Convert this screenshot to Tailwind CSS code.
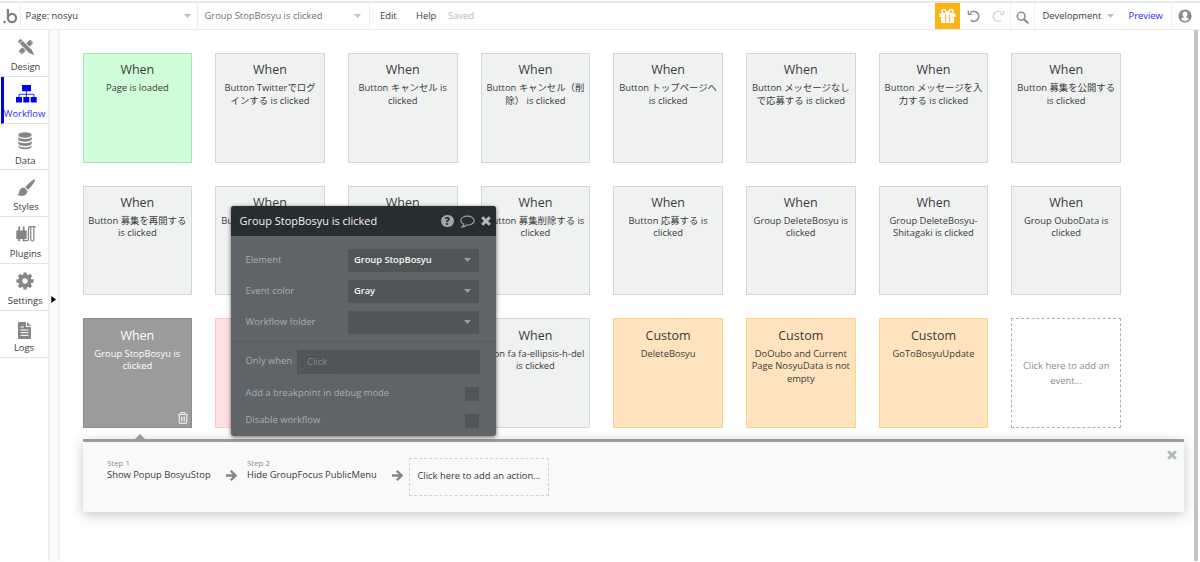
<!DOCTYPE html>
<html lang="ja">
  <head>
    <meta charset="UTF-8" />
    <meta name="viewport" content="width=device-width, initial-scale=1.0" />
    <title>nosyu - Workflow</title>
    <script src="https://cdn.jsdelivr.net/npm/@tailwindcss/browser@4"></script>
  </head>
  <body class="bg-white overflow-hidden font-['Open_Sans','Noto_Sans_CJK_JP',sans-serif] text-[9.4px] text-[#3a3a3a]">
    <div class="relative flex flex-col w-[1200px] h-[562px] overflow-hidden">
      <!-- top bar -->
      <header class="flex items-stretch shrink-0 h-[29px] mt-px border-t-2 border-[#e6e9e9] border-b border-b-[#ebebeb]">
        <div class="flex items-center w-[20.5px] border-r border-[#eef0f1] pl-[3px]">
          <svg class="w-[15px] h-[18px]" viewBox="0 0 15 18" fill="none" stroke="#808080" stroke-width="2.2">
            <circle cx="9" cy="11" r="4.1" />
            <path d="M4.900 2v9" />
            <circle cx="1.500" cy="15" r="1.300" fill="#808080" stroke="none" />
          </svg>
        </div>
        <div class="flex items-center justify-between w-[177px] border-r border-[#e9eff1] pl-[5px] pr-[6px]">
          <span>Page: nosyu</span>
          <svg class="w-[7px] h-[4px]" viewBox="0 0 7 4" fill="#b4c2c9"><path d="M0 0h7L3.5 4z" /></svg>
        </div>
        <div class="flex items-center justify-between w-[172px] border-r border-[#e9eff1] pl-[7px] pr-[8px] text-[#707070]">
          <span>Group StopBosyu is clicked</span>
          <svg class="w-[7px] h-[4px]" viewBox="0 0 7 4" fill="#b4c2c9"><path d="M0 0h7L3.5 4z" /></svg>
        </div>
        <div class="flex items-center pl-[10.5px]">
          <span class="w-[36px]">Edit</span>
          <span class="w-[32px]">Help</span>
          <span class="text-[#b9b9b9]">Saved</span>
        </div>
        <div class="flex items-stretch ml-auto">
          <div class="flex items-center justify-center w-[25px] bg-[#fdb515]">
            <svg class="w-[17px] h-[16px]" viewBox="0 0 17 16" fill="#fff">
              <path d="M.5 5.5h16v3.600h-16zM2 9.200h13V15H2z" />
              <path d="M8.300 5.600C7.400 3 6.300 1.500 4.900 1.500a1.900 1.900 0 0 0 0 3.900zM8.700 5.600c.9-2.600 2-4.100 3.400-4.100a1.900 1.900 0 0 1 0 3.900z" fill="none" stroke="#fff" stroke-width="1.500" />
              <path d="M6.600 6.300v8.100M10.400 6.300v8.100" stroke="#fdb515" stroke-width=".9" />
            </svg>
          </div>
          <div class="flex items-center w-[50.500px] pl-[6.500px] gap-[12px] border-r border-[#eef0f1]">
            <svg class="w-[13px] h-[14px]" viewBox="0 0 13 14" fill="none" stroke="#8f8f8f" stroke-width="1.700">
              <path d="M1 5.300h3.800M1.300 1.800v3.500" stroke-width="1.400" />
              <path d="M3.200 3.700a5 5 0 1 1 .5 7.600" />
            </svg>
            <svg class="w-[13px] h-[14px]" viewBox="0 0 13 14" fill="none" stroke="#d9d9d9" stroke-width="1.700">
              <path d="M12 5.300H8.200M11.700 1.800v3.500" stroke-width="1.400" />
              <path d="M9.800 3.700a5 5 0 1 0-.5 7.600" />
            </svg>
          </div>
          <div class="flex items-center justify-center w-[24.500px] border-r border-[#eef0f1]">
            <svg class="w-[13px] h-[13px] mt-[2px]" viewBox="0 0 13 13" fill="none" stroke="#8c8c8c">
              <circle cx="5.200" cy="5.200" r="3.900" stroke-width="1.600" />
              <path d="M8.200 8.200l3.600 3.600" stroke-width="2" stroke-linecap="round" />
            </svg>
          </div>
          <div class="flex items-center justify-between w-[79px] pl-[7.500px]">
            <span>Development</span>
            <svg class="w-[7px] h-[4px]" viewBox="0 0 7 4" fill="#b4c2c9"><path d="M0 0h7L3.500 4z" /></svg>
          </div>
          <div class="flex items-center w-[58px] pl-[14.500px] border-r border-[#eef0f1] text-[#2b2bf0]">Preview</div>
          <div class="flex items-center w-[28px] pl-[6px]">
            <svg class="w-[14px] h-[14px]" viewBox="0 0 14 14">
              <circle cx="7" cy="7" r="6.600" fill="#8c8c8c" />
              <path d="M7 2.600c1.600 0 2.500 1.100 2.400 2.700 0 1.200-.5 2-1 2.500v.6c.9.500 2.100.7 2.600 1.600C10 11.300 8.600 12 7 12s-3-.7-4-2c.5-.9 1.700-1.100 2.600-1.600v-.6c-.5-.5-1-1.300-1-2.500C4.500 3.700 5.400 2.600 7 2.600z" fill="#fff" />
            </svg>
          </div>
        </div>
      </header>

      <div class="flex h-[531px]">
        <!-- sidebar -->
        <nav class="flex flex-col w-[48px] shrink-0 text-center leading-[12px]">
          <div class="flex flex-col items-center h-[46.800px] pt-[8px] pl-[3px] border-b border-[#e4e4e4]">
            <svg class="w-[18px] h-[18px]" viewBox="0 0 18 18" fill="none">
              <path d="M3.200 14.800L14.800 3.200" stroke="#858585" stroke-width="4.600" />
              <path d="M5.500 15.700l-1.600-1.600M3.900 17l-2.900-2.900M14.300 3.700l1.500 1.500" stroke="#fff" stroke-width=".7" />
              <path d="M4.500 4.500l9 9" stroke="#fff" stroke-width="5.400" />
              <path d="M2.200 2.200l10.900 10.900" stroke="#858585" stroke-width="3.900" />
              <path d="M11.300 14.600l3.300-3.300 2.700 6z" fill="#858585" />
              <path d="M2.800 5.500l2.700-2.700" stroke="#fff" stroke-width=".8" />
            </svg>
            <span class="mt-[5px]">Design</span>
          </div>
          <div class="flex flex-col items-center h-[46.900px] pt-[8px] ml-[1px] border-l-[3px] border-l-[#0000f0] border-b border-b-[#e4e4e4] text-[#3030f5]">
            <svg class="w-[21px] h-[18px]" viewBox="0 0 21 18" fill="#0000f0">
              <path d="M6 0h9v6.300H6zM0 12h6v5.600H0zM7.300 12h6v5.600h-6zM14.700 12h6v5.600h-6z" />
              <path d="M10.400 6v6M3 12V9.300h14.800V12" fill="none" stroke="#0000f0" stroke-width=".8" />
            </svg>
            <span class="mt-[5px] -ml-[3px]">Workflow</span>
          </div>
          <div class="flex flex-col items-center h-[46.800px] pt-[8px] pl-[2.500px] border-b border-[#e4e4e4]">
            <svg class="w-[14px] h-[18px]" viewBox="0 0 14 18" fill="#858585">
              <ellipse cx="7" cy="3" rx="6.700" ry="2.700" />
              <path d="M.3 4.800c1 3 12.400 3 13.400 0v2.700c-1 3-12.400 3-13.400 0zM.3 9c1 3 12.400 3 13.400 0v2.700c-1 3-12.400 3-13.400 0zM.3 13.200c1 3 12.400 3 13.400 0v1.600c-1 3.200-12.400 3.200-13.400 0z" />
            </svg>
            <span class="mt-[5px]">Data</span>
          </div>
          <div class="flex flex-col items-center h-[46.900px] pt-[9px] pl-[4px] border-b border-[#e4e4e4]">
            <svg class="w-[18px] h-[18px]" viewBox="0 0 18 18" fill="#858585">
              <path d="M17.700.5c.6.600.1 1.700-.4 2.500-1.800 3-4 5.800-6.200 7.700L8.400 8C10.400 5.500 13.500 2.800 16 1c.6-.4 1.200-.9 1.700-.5z" />
              <path d="M7.600 8.700l2.700 2.700c.3 2.700-1.500 4.900-4.500 5.300-2.200.3-4.200 0-5.500-.9 1.400-.3 1.600-1.500 1.900-3.200.4-2.500 2.600-4.400 5.400-3.900z" />
            </svg>
            <span class="mt-[4px]">Styles</span>
          </div>
          <div class="flex flex-col items-center h-[46.800px] pt-[8px] pl-[3px] border-b border-[#e4e4e4]">
            <svg class="w-[20px] h-[18px]" viewBox="0 0 20 18" fill="#858585">
              <path d="M2.300 1.500h1.800V6H2.300zM6.800 1.500h1.800V6H6.800zM.3 5.500h10.400V14H8.500v2.300H6.700V14H4v2.300H2.200V14H.3z" />
              <path d="M7.500 15.700h3.200c1.200 0 1.800-.6 1.800-1.700V3.700c0-1.300.5-2 1.600-2h4.200c.8 0 1 .3 1 1" fill="none" stroke="#858585" stroke-width="1.300" />
              <path d="M14.800 2v12.500c0 2 3 2 3 0V2" fill="none" stroke="#858585" stroke-width="1.200" />
            </svg>
            <span class="mt-[5px]">Plugins</span>
          </div>
          <div class="flex flex-col items-center h-[46.900px] pt-[8px] pl-[2.500px] border-b border-[#e4e4e4]">
            <svg class="w-[18px] h-[18px]" viewBox="0 0 18 18" fill="none" stroke="#858585">
              <circle cx="9" cy="9" r="4.700" stroke-width="4" />
              <path d="M9 .4v3M9 14.600v3M.4 9h3M14.600 9h3M2.900 2.900L5 5M13 13l2.100 2.100M2.900 15.100L5 13M13 5l2.100-2.100" stroke-width="3.300" />
            </svg>
            <span class="mt-[5px]">Settings</span>
          </div>
          <div class="flex flex-col items-center h-[46.800px] pt-[11px] border-b border-[#e4e4e4]">
            <svg class="w-[13px] h-[17px]" viewBox="0 0 13 17">
              <path d="M1 0h7v5h5v11a1 1 0 0 1-1 1H1a1 1 0 0 1-1-1V1a1 1 0 0 1 1-1zM9 0l4 4H9z" fill="#858585" />
              <path d="M2.500 5h3.500M2.500 8h8M2.500 10.700h8M2.500 13.400h8" stroke="#fff" stroke-width="1" />
            </svg>
            <span class="mt-[3px]">Logs</span>
          </div>
        </nav>
        <div class="flex w-[12px] shrink-0 bg-[#fafafa] border-x-2 border-[#efefef]">
          <svg class="w-[5px] h-[7px] mt-[265.500px] ml-px" viewBox="0 0 5 7" fill="#000"><path d="M.3 0L5 3.500.3 7z" /></svg>
        </div>

        <!-- workflow canvas -->
        <main class="flex flex-col grow pt-[23px] pl-[22.500px]">
          <div class="grid grid-cols-[repeat(8,109.700px)] auto-rows-[109.700px] gap-[23px] text-center leading-[12.500px]">
            <div class="border border-[#a5e8ae] bg-[#cffed8] pt-[7px]">
              <h3 class="text-[12.500px] leading-[17px] mb-[4px]">When</h3>
              <p>Page is loaded</p>
            </div>
            <div class="border border-[#d0d8da] bg-[#f0f2f2] pt-[7px]">
              <h3 class="text-[12.500px] leading-[17px] mb-[4px]">When</h3>
              <p>Button Twitterでログ<br />インする is clicked</p>
            </div>
            <div class="border border-[#d0d8da] bg-[#f0f2f2] pt-[7px]">
              <h3 class="text-[12.500px] leading-[17px] mb-[4px]">When</h3>
              <p>Button キャンセル is<br />clicked</p>
            </div>
            <div class="border border-[#d0d8da] bg-[#f0f2f2] pt-[7px]">
              <h3 class="text-[12.500px] leading-[17px] mb-[4px]">When</h3>
              <p class="whitespace-nowrap">Button キャンセル（削<br />除） is clicked</p>
            </div>
            <div class="border border-[#d0d8da] bg-[#f0f2f2] pt-[7px]">
              <h3 class="text-[12.500px] leading-[17px] mb-[4px]">When</h3>
              <p>Button トップページへ<br />is clicked</p>
            </div>
            <div class="border border-[#d0d8da] bg-[#f0f2f2] pt-[7px]">
              <h3 class="text-[12.500px] leading-[17px] mb-[4px]">When</h3>
              <p>Button メッセージなし<br />で応募する is clicked</p>
            </div>
            <div class="border border-[#d0d8da] bg-[#f0f2f2] pt-[7px]">
              <h3 class="text-[12.500px] leading-[17px] mb-[4px]">When</h3>
              <p>Button メッセージを入<br />力する is clicked</p>
            </div>
            <div class="border border-[#d0d8da] bg-[#f0f2f2] pt-[7px]">
              <h3 class="text-[12.500px] leading-[17px] mb-[4px]">When</h3>
              <p>Button 募集を公開する<br />is clicked</p>
            </div>

            <div class="border border-[#d0d8da] bg-[#f0f2f2] pt-[7px]">
              <h3 class="text-[12.500px] leading-[17px] mb-[4px]">When</h3>
              <p>Button 募集を再開する<br />is clicked</p>
            </div>
            <div class="border border-[#d0d8da] bg-[#f0f2f2] pt-[7px]">
              <h3 class="text-[12.500px] leading-[17px] mb-[4px]">When</h3>
              <p class="pl-[5px] text-left">Bu</p>
            </div>
            <div class="border border-[#d0d8da] bg-[#f0f2f2] pt-[7px]">
              <h3 class="text-[12.500px] leading-[17px] mb-[4px]">When</h3>
            </div>
            <div class="border border-[#d0d8da] bg-[#f0f2f2] pt-[7px]">
              <h3 class="text-[12.500px] leading-[17px] mb-[4px]">When</h3>
              <p>Button 募集削除する is<br />clicked</p>
            </div>
            <div class="border border-[#d0d8da] bg-[#f0f2f2] pt-[7px]">
              <h3 class="text-[12.500px] leading-[17px] mb-[4px]">When</h3>
              <p>Button 応募する is<br />clicked</p>
            </div>
            <div class="border border-[#d0d8da] bg-[#f0f2f2] pt-[7px]">
              <h3 class="text-[12.500px] leading-[17px] mb-[4px]">When</h3>
              <p>Group DeleteBosyu is<br />clicked</p>
            </div>
            <div class="border border-[#d0d8da] bg-[#f0f2f2] pt-[7px]">
              <h3 class="text-[12.500px] leading-[17px] mb-[4px]">When</h3>
              <p>Group DeleteBosyu-<br />Shitagaki is clicked</p>
            </div>
            <div class="border border-[#d0d8da] bg-[#f0f2f2] pt-[7px]">
              <h3 class="text-[12.500px] leading-[17px] mb-[4px]">When</h3>
              <p>Group OuboData is<br />clicked</p>
            </div>

            <div class="relative border border-[#8d8d8d] bg-[#9b9b9b] pt-[7.500px] text-white">
              <h3 class="text-[12.500px] leading-[17px] mb-[4px]">When</h3>
              <p class="font-medium">Group StopBosyu is<br />clicked</p>
              <svg class="absolute right-[3.500px] bottom-[3.500px] w-[10px] h-[12px]" viewBox="0 0 10 12" fill="none" stroke="#e8e8e8">
                <path d="M0 2.500h10M3.200 2.300V.7h3.600v1.600" stroke-width="1.200" />
                <path d="M1.300 3v7.300q0 1 1 1h5.400q1 0 1-1V3" stroke-width="1.300" />
                <path d="M3.500 4.500v5M5 4.500v5M6.500 4.500v5" stroke-width=".9" />
              </svg>
            </div>
            <div class="border border-[#fbc9c9] bg-[#ffe0e0]"></div>
            <div class="border border-[#d0d8da] bg-[#f0f2f2]"></div>
            <div class="border border-[#d0d8da] bg-[#f0f2f2] pt-[7.500px]">
              <h3 class="text-[12.500px] leading-[17px] mb-[4px]">When</h3>
              <p class="flex justify-end pr-[5px] whitespace-nowrap">Icon fa fa-ellipsis-h-del</p>
              <p>is clicked</p>
            </div>
            <div class="border border-[#ffd28c] bg-[#ffe3bf] pt-[7.500px]">
              <h3 class="text-[12.500px] leading-[17px] mb-[4px]">Custom</h3>
              <p>DeleteBosyu</p>
            </div>
            <div class="border border-[#ffd28c] bg-[#ffe3bf] pt-[7.500px]">
              <h3 class="text-[12.500px] leading-[17px] mb-[4px]">Custom</h3>
              <p>DoOubo and Current<br />Page NosyuData is not<br />empty</p>
            </div>
            <div class="border border-[#ffd28c] bg-[#ffe3bf] pt-[7.500px]">
              <h3 class="text-[12.500px] leading-[17px] mb-[4px]">Custom</h3>
              <p>GoToBosyuUpdate</p>
            </div>
            <div class="flex items-center justify-center border border-dashed border-[#b0b0b0] leading-[15.500px] text-[#8d8d8d]">
              <p>Click here to add an<br />event...</p>
            </div>
          </div>

          <!-- actions of the selected event -->
          <section class="relative flex items-start w-[1101.500px] h-[73px] mt-[11px] border-t-[3px] border-[#9b9b9b] bg-[#f9f9f9] shadow-[0_3px_12px_rgba(0,0,0,0.22)]">
            <svg class="absolute left-[52px] -top-[8px] w-[10px] h-[5px]" viewBox="0 0 10 5" fill="#9b9b9b"><path d="M5 0l5 5H0z" /></svg>
            <div class="w-[118px] pt-[16px] pl-[24.500px] whitespace-nowrap">
              <p class="text-[7.900px] leading-[10px] text-[#8d8d8d]">Step 1</p>
              <p class="leading-[13px]">Show Popup BosyuStop</p>
            </div>
            <svg class="w-[11px] h-[11px] mt-[28px] ml-[25px]" viewBox="0 0 11 11" fill="none" stroke="#858585" stroke-width="2.300"><path d="M0 5.500h9M4.800.8l4.700 4.700-4.700 4.700" /></svg>
            <div class="w-[130px] ml-[10.500px] pt-[16px] whitespace-nowrap">
              <p class="text-[7.900px] leading-[10px] text-[#8d8d8d]">Step 2</p>
              <p class="leading-[13px]">Hide GroupFocus PublicMenu</p>
            </div>
            <svg class="w-[11px] h-[11px] mt-[28px] ml-[15px]" viewBox="0 0 11 11" fill="none" stroke="#858585" stroke-width="2.300"><path d="M0 5.500h9M4.800.8l4.700 4.700-4.700 4.700" /></svg>
            <div class="flex items-center justify-center w-[140px] h-[38.500px] mt-[15.500px] ml-[6px] pb-[2px] border border-dashed border-[#ccd5d5] whitespace-nowrap">Click here to add an action...</div>
            <svg class="w-[10px] h-[10px] mt-[8px] ml-auto mr-[7px]" viewBox="0 0 10 10" fill="none" stroke="#afbbc1" stroke-width="3"><path d="M1.200 1.200l7.600 7.600M8.800 1.200L1.200 8.800" /></svg>
          </section>
        </main>
        <div class="w-[4px] shrink-0 mr-[2px] bg-[#c4c4c4]"></div>
      </div>

      <!-- event property editor -->
      <div class="absolute left-[230.500px] top-[205.500px] w-[265px] h-[230px] flex flex-col rounded-[3px] overflow-hidden bg-[#5f6468] text-[#a9adb0] shadow-[0_1px_4px_rgba(0,0,0,0.6)]">
        <div class="flex items-center h-[30.500px] shrink-0 pl-[9px] pr-[5px] bg-[#272e30]">
          <h2 class="text-[10.950px] font-medium text-[#f2f2f2]">Group StopBosyu is clicked</h2>
          <div class="flex items-center ml-auto gap-[6px]">
            <div class="flex items-center justify-center w-[12.500px] h-[12.500px] rounded-full bg-[#a0a8ac] text-[10px] leading-none font-extrabold text-[#272e30]">?</div>
            <svg class="w-[15px] h-[13px] mt-[2px]" viewBox="0 0 15 13" fill="none" stroke="#969fa3" stroke-width="1.200"><path d="M3.700 9.200C1.700 8.300.8 7 .8 5.600.8 3 3.800 1.200 7.500 1.200s6.700 1.800 6.700 4.400-3 4.500-6.700 4.500l-1.200-.1c-1.200 1.300-2.700 2-4.400 2 1-.8 1.700-1.600 1.800-2.800z" /></svg>
            <svg class="w-[10px] h-[10px] mt-[1px]" viewBox="0 0 10 10" fill="none" stroke="#b3bbbe" stroke-width="3"><path d="M1.200 1.200l7.600 7.600M8.800 1.200L1.200 8.800" /></svg>
          </div>
        </div>
        <div class="flex flex-col gap-[8px] h-[106px] shrink-0 pt-[12.500px] pl-[15px] border-b border-[#575c5f]">
          <div class="flex items-center h-[23px]">
            <span class="w-[102.500px]">Element</span>
            <div class="flex items-center justify-between w-[131px] h-full pl-[6px] pr-[8px] bg-[#505558] font-semibold tracking-[-0.07px] text-[#f5f5f5]">
              Group StopBosyu
              <svg class="w-[7px] h-[4px]" viewBox="0 0 7 4" fill="#979c9f"><path d="M0 0h7L3.500 4z" /></svg>
            </div>
          </div>
          <div class="flex items-center h-[23px]">
            <span class="w-[102.500px]">Event color</span>
            <div class="flex items-center justify-between w-[131px] h-full pl-[6px] pr-[8px] bg-[#505558] font-semibold tracking-[-0.07px] text-[#f5f5f5]">
              Gray
              <svg class="w-[7px] h-[4px]" viewBox="0 0 7 4" fill="#979c9f"><path d="M0 0h7L3.500 4z" /></svg>
            </div>
          </div>
          <div class="flex items-center h-[23px]">
            <span class="w-[102.500px]">Workflow folder</span>
            <div class="flex items-center justify-end w-[131px] h-full pr-[8px] bg-[#505558]">
              <svg class="w-[7px] h-[4px]" viewBox="0 0 7 4" fill="#979c9f"><path d="M0 0h7L3.500 4z" /></svg>
            </div>
          </div>
        </div>
        <div class="flex flex-col pt-[7.500px] pl-[15px]">
          <div class="flex items-center h-[24px]">
            <span class="w-[51.500px]">Only when</span>
            <div class="flex items-center w-[183px] h-full pl-[3px] bg-[#505558]">
              <span class="px-[6px] leading-[13px] border border-dotted border-[#5a5f62] text-[#868b8e]">Click</span>
            </div>
          </div>
          <div class="flex items-center justify-between h-[14px] mt-[13px] w-[233px]">
            <span>Add a breakpoint in debug mode</span>
            <div class="w-[14px] h-[14px] bg-[#505558]"></div>
          </div>
          <div class="flex items-center justify-between h-[14px] mt-[13px] w-[233px]">
            <span>Disable workflow</span>
            <div class="w-[14px] h-[14px] bg-[#505558]"></div>
          </div>
        </div>
      </div>
    </div>
  </body>
</html>
